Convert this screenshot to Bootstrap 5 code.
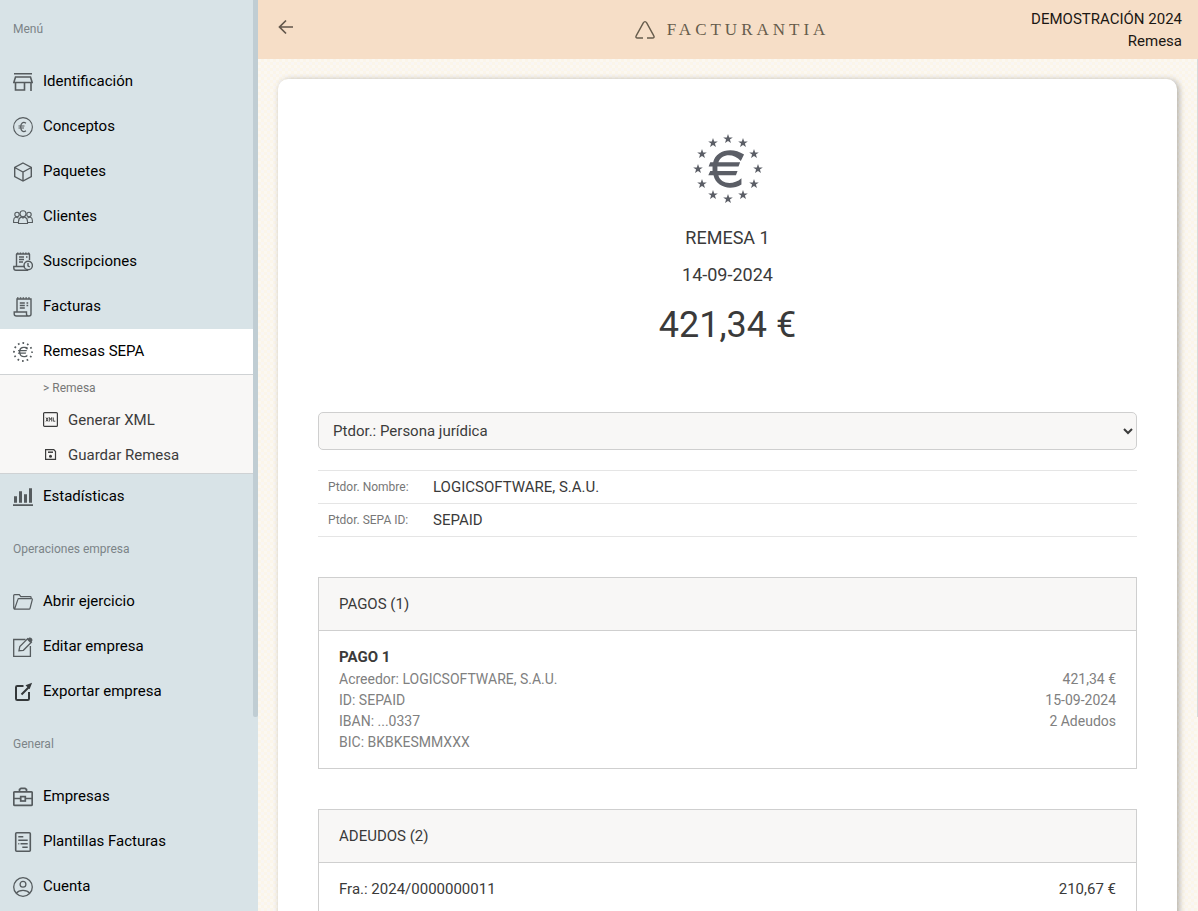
<!DOCTYPE html>
<html lang="es">
<head>
<meta charset="utf-8">
<meta name="viewport" content="width=device-width, initial-scale=1">
<title>Facturantia - Remesa</title>
<link href="https://cdn.jsdelivr.net/npm/bootstrap@5.3.0/dist/css/bootstrap.min.css" rel="stylesheet">
<style>
body{font-family:Roboto,"Liberation Sans",sans-serif;font-size:15px;line-height:22px;color:#3a3a3a;background:#d8e3e7}
.scroller{overflow-y:auto;scrollbar-width:none}
.scroller::-webkit-scrollbar{display:none}
.sidebar{width:258px;background:#d8e3e7}
.rail{width:5px}
.thumb{height:717px;background:#c0cdd3;border-radius:0 0 2px 2px}
.section-label{height:60px;padding:0 13px;font-size:12px;color:#7c8487;display:flex;align-items:center;margin:0;font-weight:400}
.section-first{height:59px}
.menu-row{height:45px;padding:0 13px 1px;gap:10px;color:#000;display:flex;align-items:center;text-decoration:none}
.menu-row svg{width:20px;height:20px;margin-top:2px;color:#555b5e}
.menu-row.current{height:46px;background:#fff;border-bottom:1px solid #cfd2d4}
.submenu{background:#f8f7f6;border-bottom:1px solid #cfd2d4;padding-bottom:1px}
.submenu-label{height:27px;padding-left:43px;font-size:12px;line-height:27px;color:#777}
.submenu-row{height:35px;width:100%;padding:0 0 0 43px;gap:10px;border:0;background:none;color:#3c3c3c;display:flex;align-items:center;text-align:left}
.submenu-row svg{width:15px;height:15px}
.ic{fill:none;stroke:currentColor;stroke-width:1.4;flex:none}
.topbar{height:59px;flex:none;background:#f6dec7;color:#1b1713;display:grid;grid-template-columns:1fr auto 1fr;padding:0 16px}
.back{width:24px;height:24px;padding:0;border:0;background:none;color:#62564b;display:flex;align-items:center;justify-content:center;margin-bottom:5px}
.brand{font-family:"Liberation Serif",serif;font-size:17px;letter-spacing:4px;color:#665c4c;gap:12px;padding-left:8px}
.canvas{background-color:#fbf7f0;background-image:conic-gradient(#fbf5e9 25%,#f9f6f4 0 50%,#fbf5e9 0 75%,#fbf8f2 0);background-size:6px 6px;padding:20px 20px 0}
.canvas-rail{width:1px;background:#fbf7f0}
.canvas-rail div{height:658px;background:#d6dadb}
.sheet{background:#fff;border-radius:10px;padding:55px 40px 40px;box-shadow:2px 1px 6px rgba(0,0,0,.3)}
.sheet-title{font-size:18px;line-height:27px;font-weight:400;margin:0 0 10px}
.total{font-size:36px;line-height:44px;margin:15px 0 65px}
.payer{height:38px;width:100%;padding:0 10px;font-size:15px;color:#3c3c3c;background:#f8f7f6;border:1px solid #cfcfcf;border-radius:5px;margin-bottom:20px}
.facts{width:100%;border-top:1px solid #e5e5e5;margin-bottom:40px}
.facts tr{height:33px;border-bottom:1px solid #e5e5e5}
.facts th{width:115px;padding:0 10px;font-size:12px;font-weight:400;color:#777}
.facts td{padding:0}
.panel{border:1px solid #cfcfcf;margin-bottom:40px}
.panel h2{font-size:15px;font-weight:400;line-height:22px;margin:0;padding:15px 20px;background:#f8f7f6;border-bottom:1px solid #cfcfcf}
.panel-item{padding:15px 20px}
.detail{font-size:14px;line-height:21px;color:#808080;margin-top:1px}
</style>
</head>
<body>
<svg class="d-none">
  <symbol id="euro" viewBox="70 74 112 117"><path fill="currentColor" stroke="none" d="M180 88C142 62 92 76 85 112H76L71 125H83V139H76L70 152H86C95 190 140 200 172 180V161C145 185 107 178 101 152H155L160 139H98V125H163L168 112H101C110 85 148 82 170 108z"/></symbol>
  <symbol id="star" viewBox="-5 -5 10 10"><path fill="currentColor" stroke="none" d="M0-5 1.200-1.600 4.800-1.550 1.900.600 2.950 4.050 0 2 -2.950 4.050 -1.900.600 -4.800-1.550 -1.200-1.600z"/></symbol>
</svg>
<div class="d-flex vh-100 overflow-hidden">
  <aside class="sidebar d-flex flex-shrink-0">
    <nav class="scroller flex-grow-1" aria-label="Menú">
      <h2 class="section-label section-first">Menú</h2>
      <a class="menu-row" href="#"><svg class="ic" viewBox="0 0 20 20"><path d="M1 1.700h18M2.500 5h15l1.700 5.500H.800zM2.500 10.500V18h9v-7.500M18 10.500V19" stroke-width="1.600"/></svg>Identificación</a>
      <a class="menu-row" href="#"><svg class="ic" viewBox="0 0 20 20"><circle cx="10" cy="10" r="9.400" stroke-width="1.100"/><path d="M13 6.200C10 4.300 7.700 6.300 7.700 10s2.300 5.700 5.300 3.800M5.500 9h6M5.500 11h5.500" stroke-width="1.200"/></svg>Conceptos</a>
      <a class="menu-row" href="#"><svg class="ic" viewBox="0 0 20 20"><path d="m10 1 8.300 4.500v9L10 19l-8.300-4.500v-9zM1.700 5.500 10 10l8.300-4.500M10 10v9"/></svg>Paquetes</a>
      <a class="menu-row" href="#"><svg class="ic" viewBox="0 0 20 20"><g stroke-width="1.100"><circle cx="10" cy="6.800" r="3"/><path d="M5.500 16.500v-2c0-2.500 1.500-4 3-4.500l1.500 1 1.500-1c1.500.500 3 2 3 4.500v2z"/><circle cx="4" cy="7.500" r="2.200"/><circle cx="16" cy="7.500" r="2.200"/><path d="M5.500 15.500H.600v-2c0-1.800 1-2.900 2.200-3.400L5.500 11M14.500 15.500h4.900v-2c0-1.800-1-2.900-2.200-3.400L14.500 11"/></g></svg>Clientes</a>
      <a class="menu-row" href="#"><svg class="ic" viewBox="0 0 20 20"><path d="M3.500 14V2M16.500 8V2M3 2h14"/><path d="M4 1.200h13" stroke-dasharray="1.500 1.200"/><path d="M6 5h5M13 5h1.500M6 7.500h5M6 10h4M12 14.500H.800V16c0 1.500.800 2.300 2.200 2.300h12"/><circle cx="15.200" cy="13.500" r="4.200"/><path d="M15 11v2.800l1.700 1.200"/></svg>Suscripciones</a>
      <a class="menu-row" href="#"><svg class="ic" viewBox="0 0 20 20"><path d="M4 14.500V2h14v15.300c0 1-1 1.700-2 1.700H3.500C2 19 1.200 18.300 1.200 17v-2h12.300v2c0 1.200.700 2 2 2"/><path d="M4 1h14" stroke-dasharray="1.500 1.300"/><path d="M6.800 6h5M13.500 6h1.700M6.800 8.500h5M13.500 8.500h1.700M6.800 11h5"/></svg>Facturas</a>
      <a class="menu-row current" href="#" aria-current="page"><svg class="ic" viewBox="0 0 20 20"><circle cx="10" cy="10" r="9" stroke-width="1.800" stroke-dasharray="1.700 3.012" stroke-dashoffset=".8"/><use href="#euro" x="4.500" y="4.500" width="11" height="11"/></svg>Remesas SEPA</a>
      <div class="submenu">
        <div class="submenu-label">&gt; Remesa</div>
        <button class="submenu-row" type="button"><svg class="ic" viewBox="0 0 15 15"><rect x=".6" y=".6" width="13.800" height="13.800" rx="1" stroke-width="1.200"/><path d="m3 5.500 2 4m0-4-2 4M6.300 9.500v-4l1.200 2 1.200-2v4M10.300 5.500v3.700h2" stroke-width=".9"/></svg>Generar XML</button>
        <button class="submenu-row" type="button"><svg class="ic" viewBox="0 0 15 15"><path d="M2.600 2.600h8.200l1.700 1.900v7.900H2.600z" stroke-width="1.200"/><path d="M5 5.200h5" stroke-width="1.500"/><circle cx="7.500" cy="9.300" r="1.500" fill="currentColor" stroke="none"/></svg>Guardar Remesa</button>
      </div>
      <a class="menu-row" href="#"><svg class="ic" viewBox="0 0 20 20"><path fill="currentColor" stroke="none" d="M0 17.200h20V19H0zM1 9.200h3v6.500H1zM6 4.200h3v11.500H6zM11 7.200h3v8.500h-3zM16 1.200h3v14.500h-3z"/></svg>Estadísticas</a>
      <h2 class="section-label">Operaciones empresa</h2>
      <a class="menu-row" href="#"><svg class="ic" viewBox="0 0 20 20"><path d="M1.500 17.200.700 16V3.500c0-.600.300-.900.900-.9h4.700l1.500 2h9.500c.500 0 .8.300.8.8v1.300M1.500 17.200h14.600c.500 0 .8-.200.900-.7l2.300-8.800c.100-.600-.1-1-.7-1H5.800c-.500 0-.8.300-.9.700z" stroke-width="1.200"/></svg>Abrir ejercicio</a>
      <a class="menu-row" href="#"><svg class="ic" viewBox="0 0 20 20"><path d="M12.500 2.500H.700v16.800h16.700V9" stroke-width="1.300"/><path d="m6 13.700.8-4.200L14.700 1.600l3.700 3.700-8 8z" stroke-width="1.300"/><path d="m14 2.600 1.700-1.700c1.800-1.400 4.800 1 3.300 3.300l-1.600 1.700z" fill="currentColor" stroke="none"/></svg>Editar empresa</a>
      <a class="menu-row" href="#"><svg class="ic" viewBox="0 0 20 20" color="#34383a"><g stroke="#34383a"><path d="M10.500 4H4.300C3.400 4 3 4.400 3 5.300v11.400c0 .9.400 1.300 1.300 1.300h10.400c.9 0 1.300-.4 1.300-1.300V10M8.500 12.500 16 5" stroke-width="2"/><path fill="#34383a" stroke="none" d="m12.500 3.200 6.600-2.500-2.500 6.600z"/></g></svg>Exportar empresa</a>
      <h2 class="section-label">General</h2>
      <a class="menu-row" href="#"><svg class="ic" viewBox="0 0 20 20"><g stroke-width="1.700"><rect x=".8" y="4.800" width="18.400" height="13.600" rx="1"/><path d="M6.500 4.500v-2L8 1.300h4l1.500 1.200v2M1 11.500h6.500M12.500 11.500H19"/><rect x="7.700" y="9.600" width="4.600" height="4.400"/></g></svg>Empresas</a>
      <a class="menu-row" href="#"><svg class="ic" viewBox="0 0 20 20"><rect x="2.700" y=".8" width="14.600" height="18.400" rx="1" stroke-width="1.600"/><path d="M5.300 4.800h5M5.300 8.300h9.400M7.500 11.800h7.200M5.300 11.800h1M9.300 15.300h5.400"/></svg>Plantillas Facturas</a>
      <a class="menu-row" href="#"><svg class="ic" viewBox="0 0 20 20"><g stroke-width="1.300"><circle cx="10" cy="10" r="9.300"/><circle cx="10" cy="7.300" r="2.900"/><path d="M3.200 16.300c3-3.800 10.600-3.800 13.600 0"/></g></svg>Cuenta</a>
    </nav>
    <div class="rail"><div class="thumb"></div></div>
  </aside>
  <div class="d-flex flex-column flex-grow-1">
    <header class="topbar align-items-center">
      <button class="back" type="button" aria-label="Volver"><svg class="ic" width="16" height="16" viewBox="0 0 16 16"><path d="M15 8H1.800M8 1.500 1.500 8 8 14.500" stroke-width="1.700"/></svg></button>
      <div class="brand d-flex align-items-center"><svg class="ic" width="20" height="20" viewBox="0 0 20 20"><path d="M8 18H2.500c-1.500 0-2-1-1.200-2.300L8.300 2.900C9.300 1.200 10.700 1.200 11.700 2.900l7 12.800c.8 1.300.3 2.300-1.200 2.300H12" stroke-width="1.400"/></svg><span>FACTURANTIA</span></div>
      <div class="text-end">DEMOSTRACIÓN 2024<br>Remesa</div>
    </header>
    <div class="d-flex flex-grow-1 overflow-hidden">
      <main class="canvas scroller flex-grow-1">
        <div class="sheet">
          <div class="text-center">
            <svg class="d-block mx-auto mb-3" width="70" height="70" viewBox="0 0 70 70" color="#5b5e66" role="img" aria-label="SEPA">
              <use href="#euro" x="15" y="16" width="37" height="38"/>
              <use href="#star" x="30" y="0" width="10" height="10"/><use href="#star" x="45" y="4" width="10" height="10"/><use href="#star" x="56" y="15" width="10" height="10"/><use href="#star" x="60" y="30" width="10" height="10"/><use href="#star" x="56" y="45" width="10" height="10"/><use href="#star" x="45" y="56" width="10" height="10"/><use href="#star" x="30" y="60" width="10" height="10"/><use href="#star" x="15" y="56" width="10" height="10"/><use href="#star" x="4" y="45" width="10" height="10"/><use href="#star" x="0" y="30" width="10" height="10"/><use href="#star" x="4" y="15" width="10" height="10"/><use href="#star" x="15" y="4" width="10" height="10"/>
            </svg>
            <h1 class="sheet-title pt-1">REMESA 1</h1>
            <p class="sheet-title">14-09-2024</p>
            <p class="total">421,34 €</p>
          </div>
          <select class="payer" aria-label="Presentador"><option>Ptdor.: Persona jurídica</option><option>Ptdor.: Persona física</option></select>
          <table class="facts">
            <tr><th scope="row">Ptdor. Nombre:</th><td>LOGICSOFTWARE, S.A.U.</td></tr>
            <tr><th scope="row">Ptdor. SEPA ID:</th><td>SEPAID</td></tr>
          </table>
          <section class="panel">
            <h2>PAGOS (1)</h2>
            <div class="panel-item">
              <div class="fw-bold">PAGO 1</div>
              <div class="detail d-flex justify-content-between">
                <div>Acreedor: LOGICSOFTWARE, S.A.U.<br>ID: SEPAID<br>IBAN: ...0337<br>BIC: BKBKESMMXXX</div>
                <div class="text-end">421,34 €<br>15-09-2024<br>2 Adeudos</div>
              </div>
            </div>
          </section>
          <section class="panel">
            <h2>ADEUDOS (2)</h2>
            <div class="panel-item d-flex justify-content-between"><span>Fra.: 2024/0000000011</span><span>210,67 €</span></div>
          </section>
        </div>
      </main>
      <div class="canvas-rail"><div></div></div>
    </div>
  </div>
</div>
<script src="https://cdn.jsdelivr.net/npm/bootstrap@5.3.0/dist/js/bootstrap.bundle.min.js"></script>
</body>
</html>
